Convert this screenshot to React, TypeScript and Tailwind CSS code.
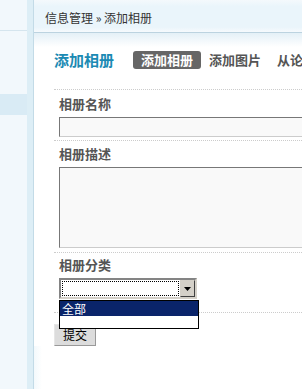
const font = "font-['SimSun','Noto_Sans_CJK_SC','Liberation_Sans',sans-serif]";

function Sidebar() {
  return (
    <div className="flex h-full w-[34px] shrink-0 border-r border-[#c3dbe7]">
      <div className="flex w-[27px] flex-col">
        <div className="h-[31px] border-b border-[#d5e5ee] bg-[#f2f8fc]" />
        <div className="h-[63px] bg-[#f2f8fc]" />
        <div className="h-[21px] bg-[#d9ebf5]" />
        <div className="flex-1 bg-[#f2f8fc]" />
      </div>
      <div className="w-[6px] bg-[#ddeef6]" />
    </div>
  );
}

function Field({ label, children, pt, gap, pb }: { label: string; children: React.ReactNode; pt: string; gap: string; pb: string }) {
  return (
    <div className={`border-t border-dotted border-[#cccccc] pl-[5px] ${pt} ${pb}`}>
      <div className={`text-[13px] font-bold leading-[18px] text-[#555] ${gap}`}>{label}</div>
      {children}
    </div>
  );
}

export default function App() {
  return (
    <div className={`flex h-[389px] w-[302px] overflow-hidden bg-white ${font}`}>
      <Sidebar />
      <div className="flex w-[420px] shrink-0 flex-col bg-[linear-gradient(to_right,#f3f9fc,#ffffff_8px)]">
        <div className="flex h-[33px] items-center border-b border-[#bcd3e0] bg-[linear-gradient(to_bottom,#f4f9fc,#eaf5fb_20%,#eaf5fb_85%,#f6fafd)] pl-[11px] pt-[3px] text-[12px] text-[#333]">
          信息管理 » 添加相册
        </div>
        <div className="bg-[linear-gradient(to_bottom,#e4f0f7,#ffffff_14px)] pl-[20px] pt-[18px]">
          <div className="flex h-[18px] items-center">
            <span className="text-[15px] font-bold text-[#1b8ab3]">添加相册</span>
            <span className="ml-[19px] rounded-[3px] bg-[#666] px-[8px] text-[13px] font-bold leading-[18px] text-white">添加相册</span>
            <span className="px-[8px] text-[13px] font-bold leading-[18px] text-[#555]">添加图片</span>
            <span className="px-[8px] text-[13px] font-bold leading-[18px] text-[#555]">从论坛导入</span>
          </div>
          <div className="mt-[20px]">
            <Field label="相册名称" pt="pt-[5px]" gap="mb-[4px]" pb="pb-[3px]">
              <div className="h-[20px] border border-[#777] border-b-[#ccc] border-r-[#ccc] bg-[#f9f9f9]" />
            </Field>
            <Field label="相册描述" pt="pt-[4px]" gap="mb-[4px]" pb="pb-[4px]">
              <div className="h-[81px] border border-[#777] border-b-[#ccc] border-r-[#ccc] bg-[#f9f9f9]" />
            </Field>
            <Field label="相册分类" pt="pt-[3px]" gap="mb-[4px]" pb="pb-[13px]">
              <div className="relative w-[138px]">
                <div className="flex h-[21px] border-2 border-[#848484] border-b-[#d4d0c8] border-r-[#d4d0c8] bg-white">
                  <div className="m-[1px] flex-1 border border-dotted border-black" />
                  <div className="flex w-[15px] items-center justify-center border border-[#d4d0c8] border-b-[#404040] border-r-[#404040] bg-[#d4d0c8]">
                    <svg width="7" height="4" viewBox="0 0 7 4">
                      <path d="M0 0h7L3.5 4z" fill="#000" />
                    </svg>
                  </div>
                </div>
                <div className="absolute left-0 top-[22px] z-10 w-[140px] border border-black bg-white">
                  <div className="h-[15px] bg-[#0a246a] pl-[2px] text-[12px] leading-[15px] text-white">全部</div>
                  <div className="h-[12px]" />
                </div>
              </div>
            </Field>
            <div className="border-t border-dotted border-[#cccccc] pt-[8px]">
              <button className="h-[22px] w-[42px] border border-[#e6e6e6] border-b-[#999] border-r-[#999] bg-[#dcdcdc] text-[12px] text-black">
                提交
              </button>
            </div>
          </div>
        </div>
      </div>
    </div>
  );
}
